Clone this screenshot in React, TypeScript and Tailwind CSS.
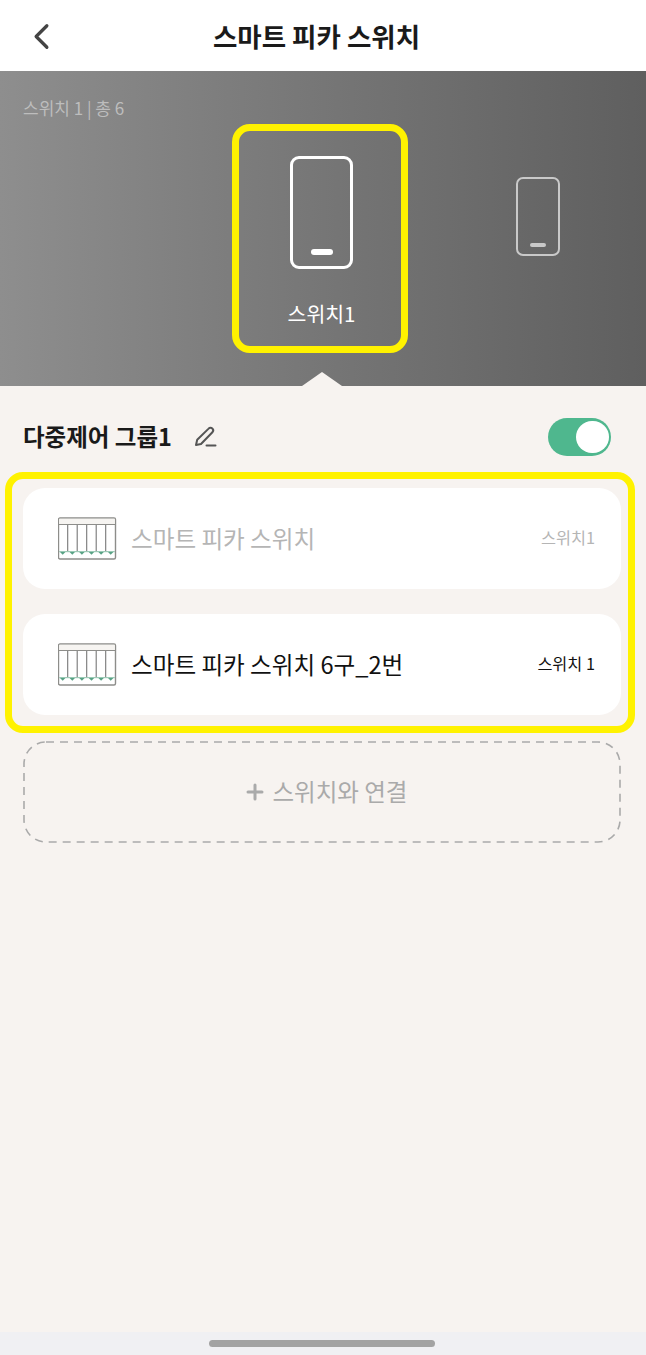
import { ChevronLeft, Plus } from "lucide-react";

const font = { fontFamily: '"Noto Sans CJK KR", Roboto, sans-serif' };

function SwitchGlyph({ large }: { large?: boolean }) {
  if (large) {
    return (
      <div className="flex h-[113px] w-[63px] flex-col items-center justify-end rounded-[9px] border-[3px] border-white pb-[11px]">
        <div className="h-[6px] w-[22px] rounded-full bg-white" />
      </div>
    );
  }
  return (
    <div className="flex h-[79px] w-[44px] flex-col items-center justify-end rounded-[7px] border-2 border-[#c9c9c9] pb-[7px]">
      <div className="h-[4px] w-[16px] rounded-full bg-[#c9c9c9]" />
    </div>
  );
}

function DeviceIcon() {
  const dividers = [0, 1, 2, 3, 4];
  const markers = [0, 1, 2, 3, 4, 5];
  return (
    <svg width="60" height="44" viewBox="0 0 60 44" className="shrink-0">
      <rect x="0.5" y="1" width="57" height="41" rx="1.5" fill="#fff" stroke="#8d8d8a" strokeWidth="1.4" />
      <rect x="1.2" y="1.7" width="55.6" height="6" fill="#f6f4f1" />
      <line x1="0.5" y1="7.5" x2="57.5" y2="7.5" stroke="#8d8d8a" strokeWidth="1.1" />
      {dividers.map((i) => (
        <line key={i} x1={9.7 + i * 9.5} y1="8" x2={9.7 + i * 9.5} y2="34" stroke="#777" strokeWidth="1.1" />
      ))}
      <rect x="1.2" y="34" width="55.6" height="1.2" fill="#9ccab6" />
      {markers.map((i) => (
        <path key={i} d={`M${2 + i * 9.6} 35h5.4l-2.7 2.8z`} fill="#58a285" />
      ))}
    </svg>
  );
}

function DeviceCard({ name, slot, muted }: { name: string; slot: string; muted?: boolean }) {
  return (
    <div className="flex h-[101px] w-[598px] items-center rounded-[22px] bg-white pl-[35px] pr-[26px]">
      <DeviceIcon />
      <span className={`ml-[13px] flex-1 text-[23.6px] ${muted ? "text-[#b5b5b5]" : "text-[#111]"}`}>{name}</span>
      <span className={`pb-[2px] text-[16.3px] ${muted ? "text-[#b5b5b5]" : "text-[#111]"}`}>{slot}</span>
    </div>
  );
}

export default function App() {
  return (
    <div className="relative flex h-[1355px] w-[646px] flex-col overflow-hidden bg-[#f7f3f0]" style={font}>
      {/* header */}
      <header className="relative flex h-[71px] shrink-0 items-center justify-center bg-white pr-[13px]">
        <ChevronLeft className="absolute left-[20px] top-[15px] h-[43px] w-[43px] text-[#444]" strokeWidth={1.8} />
        <h1 className="text-[26.5px] font-bold text-[#1a1a1a]">스마트 피카 스위치</h1>
      </header>

      {/* switch carousel */}
      <section className="relative h-[315px] shrink-0 bg-gradient-to-r from-[#8e8e8e] to-[#5f5f5f]">
        <p className="pl-[23px] pt-[25px] text-[17px] leading-[24px] text-[#bdbdbd]">스위치 1 | 총 6</p>
        <div className="absolute left-[290px] top-[85px] flex flex-col items-center">
          <SwitchGlyph large />
        </div>
        <span className="absolute left-[232px] top-[228px] w-[179px] text-center text-[20.5px] leading-[28px] text-white">스위치1</span>
        <div className="absolute left-[516px] top-[106px]">
          <SwitchGlyph />
        </div>
        <svg width="40" height="14" viewBox="0 0 40 14" className="absolute bottom-0 left-[302px]">
          <path d="M20 0L40 14H0z" fill="#f7f3f0" />
        </svg>
      </section>

      {/* group */}
      <main className="flex flex-col px-[23px]">
        <div className="flex h-[102px] items-center justify-between pr-[12px]">
          <div className="flex items-center gap-[22px]">
            <h2 className="text-[23.5px] font-bold text-[#1a1a1a]">다중제어 그룹1</h2>
            <svg width="24" height="22" viewBox="0 0 24 22" fill="none" stroke="#555" strokeWidth="2" strokeLinecap="round" strokeLinejoin="round">
              <path d="M2 19l1.2-5.2L14.6 2.6a2.6 2.6 0 0 1 3.8 3.6L7 18z" />
              <path d="M12.5 19.5h9" />
            </svg>
          </div>
          <div className="flex h-[38px] w-[63px] items-center justify-end rounded-full bg-[#4fb78e] pr-[2px]">
            <div className="h-[32px] w-[33px] rounded-full bg-white" />
          </div>
        </div>

        <div className="flex flex-col gap-[25px]">
          <DeviceCard name="스마트 피카 스위치" slot="스위치1" muted />
          <DeviceCard name="스마트 피카 스위치 6구_2번" slot="스위치 1" />
        </div>

        <div className="relative mt-[26px] flex h-[102px] w-[598px] items-center justify-center gap-[6px] pl-[6px] text-[23.5px] text-[#aaa]">
          <svg width="598" height="102" className="absolute inset-0" fill="none">
            <rect x="1" y="1" width="596" height="100" rx="22" stroke="#aaa" strokeWidth="1.6" strokeDasharray="8 6" />
          </svg>
          <Plus className="h-[24px] w-[24px]" strokeWidth={3} />
          <span>스위치와 연결</span>
        </div>
      </main>

      {/* annotation highlights */}
      <div className="absolute left-[232px] top-[124px] h-[229px] w-[176px] rounded-[18px] border-[7px] border-[#fff200]" />
      <div className="absolute left-[5px] top-[472px] h-[261px] w-[630px] rounded-[18px] border-[7px] border-[#fff200]" />

      {/* home indicator */}
      <div className="absolute bottom-0 left-0 flex h-[23px] w-full items-center justify-center bg-[#f0f0f3] pr-[3px]">
        <div className="h-[7px] w-[226px] rounded-full bg-[#a3a3a3]" />
      </div>
    </div>
  );
}
